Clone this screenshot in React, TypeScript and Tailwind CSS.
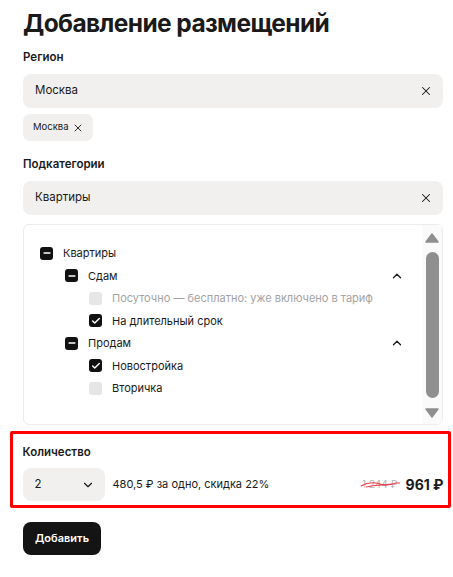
import React, { useState } from "react";
import { X, ChevronUp, ChevronDown, Check, Minus } from "lucide-react";

type Mark = "minus" | "check" | "off";

const Box = ({ mark }: { mark: Mark }) => {
  if (mark === "off") {
    return <span className="w-[13px] h-[13px] rounded-[3px] bg-[#e6e6e6] shrink-0" />;
  }
  return (
    <span className="w-[13px] h-[13px] rounded-[3px] bg-[#111111] shrink-0 flex items-center justify-center">
      {mark === "minus" ? (
        <Minus size={10} strokeWidth={3.5} className="text-white" />
      ) : (
        <Check size={10} strokeWidth={3.5} className="text-white" />
      )}
    </span>
  );
};

const Row = ({
  mark,
  label,
  indent,
  muted,
  open,
}: {
  mark: Mark;
  label: string;
  indent: string;
  muted?: boolean;
  open?: boolean;
}) => (
  <div className={`flex items-center h-[22.5px] ${indent}`}>
    <Box mark={mark} />
    <span className={`ml-[10px] text-[11px] ${muted ? "text-[#a3a3a3]" : "text-[#1a1a1a]"}`}>
      {label}
    </span>
    {open && (
      <ChevronUp size={14} strokeWidth={2.2} className="ml-auto mr-[-4px] text-[#1a1a1a]" />
    )}
  </div>
);

const App = () => {
  const [region, setRegion] = useState("Москва");
  const [sub, setSub] = useState("Квартиры");

  return (
    <div
      className="pl-[23px] pr-[10px] pt-[5px] pb-6 text-[#1a1a1a] bg-white"
      style={{ fontFamily: "Inter, 'Noto Sans', sans-serif" }}
    >
      <h1 className="text-[24.5px] font-bold leading-[36px] tracking-[-0.6px]">
        Добавление размещений
      </h1>

      <div className="mt-[8px] text-[11.5px] font-semibold leading-4">Регион</div>
      <div className="mt-[9px] h-[34px] rounded-[8px] bg-[#f1f0ee] flex items-center pl-[12px] pr-[10px]">
        <span className="text-[11.5px]">{region}</span>
        <X size={14} strokeWidth={1.8} className="ml-auto cursor-pointer" onClick={() => setRegion("")} />
      </div>
      <div className="mt-[6px] inline-flex items-center h-[27px] rounded-[7px] bg-[#f1f0ee] pl-[10px] pr-[9px] gap-[3px]">
        <span className="text-[9.5px]">Москва</span>
        <X size={12} strokeWidth={1.8} />
      </div>

      <div className="mt-[15px] text-[11.5px] font-semibold leading-4">Подкатегории</div>
      <div className="mt-[9px] h-[34px] rounded-[8px] bg-[#f1f0ee] flex items-center pl-[12px] pr-[10px]">
        <span className="text-[11.5px]">{sub}</span>
        <X size={14} strokeWidth={1.8} className="ml-auto cursor-pointer" onClick={() => setSub("")} />
      </div>

      <div className="mt-[9px] h-[201px] rounded-[6px] border border-[#ececec] flex">
        <div className="flex-1 pl-[16px] pr-[22px] pt-[17px]">
          <Row mark="minus" label="Квартиры" indent="" />
          <Row mark="minus" label="Сдам" indent="pl-[25px]" open />
          <Row mark="off" label="Посуточно — бесплатно: уже включено в тариф" indent="pl-[49px]" muted />
          <Row mark="check" label="На длительный срок" indent="pl-[49px]" />
          <Row mark="minus" label="Продам" indent="pl-[25px]" open />
          <Row mark="check" label="Новостройка" indent="pl-[49px]" />
          <Row mark="off" label="Вторичка" indent="pl-[49px]" />
        </div>
        <div className="w-[20px] bg-[#fafafa] flex flex-col items-center pt-[8px] pb-[6px]">
          <svg width="14" height="10" viewBox="0 0 14 10">
            <path d="M7 1 L13 9 L1 9 Z" fill="#8f8f8f" stroke="#8f8f8f" strokeLinejoin="round" strokeWidth="1.5" />
          </svg>
          <div className="mt-[9px] w-[13px] h-[146px] rounded-full bg-[#8f8f8f]" />
          <svg className="mt-auto" width="14" height="10" viewBox="0 0 14 10">
            <path d="M1 1 L13 1 L7 9 Z" fill="#8f8f8f" stroke="#8f8f8f" strokeLinejoin="round" strokeWidth="1.5" />
          </svg>
        </div>
      </div>

      <div className="mt-[6px] ml-[-13px] mr-[-8px] border-[3.5px] border-[#ff0000] rounded-[2px] pl-[9.5px] pr-[4.5px] pt-[10px] pb-[4px]">
        <div className="text-[11.5px] font-semibold leading-4">Количество</div>
        <div className="mt-[8px] flex items-center">
          <div className="w-[82px] h-[33px] rounded-[8px] bg-[#f1f0ee] flex items-center pl-[12px] pr-[10px]">
            <span className="text-[11.5px]">2</span>
            <ChevronDown size={14} strokeWidth={2} className="ml-auto" />
          </div>
          <span className="ml-[8px] text-[11px]">480,5 ₽ за одно, скидка 22%</span>
          <span className="ml-auto relative text-[10px] text-[#b5b5b5]">
            1 244 ₽
            <svg className="absolute left-[-2px] top-[3px]" width="42" height="10" viewBox="0 0 42 10">
              <path d="M1 6 C8 2, 14 2, 20 4 C26 6, 30 5, 36 3 L40 3" fill="none" stroke="#ef3b4a" strokeWidth="1.2" />
              <path d="M6 7 C14 5, 24 5, 32 4" fill="none" stroke="#ef3b4a" strokeWidth="1" />
            </svg>
          </span>
          <span className="ml-[8px] text-[14px] font-bold">961 ₽</span>
        </div>
      </div>

      <button className="mt-[14px] h-[33px] px-[12px] rounded-[8px] bg-[#141414] text-white text-[11px] font-semibold">
        Добавить
      </button>
    </div>
  );
};

export default App;
